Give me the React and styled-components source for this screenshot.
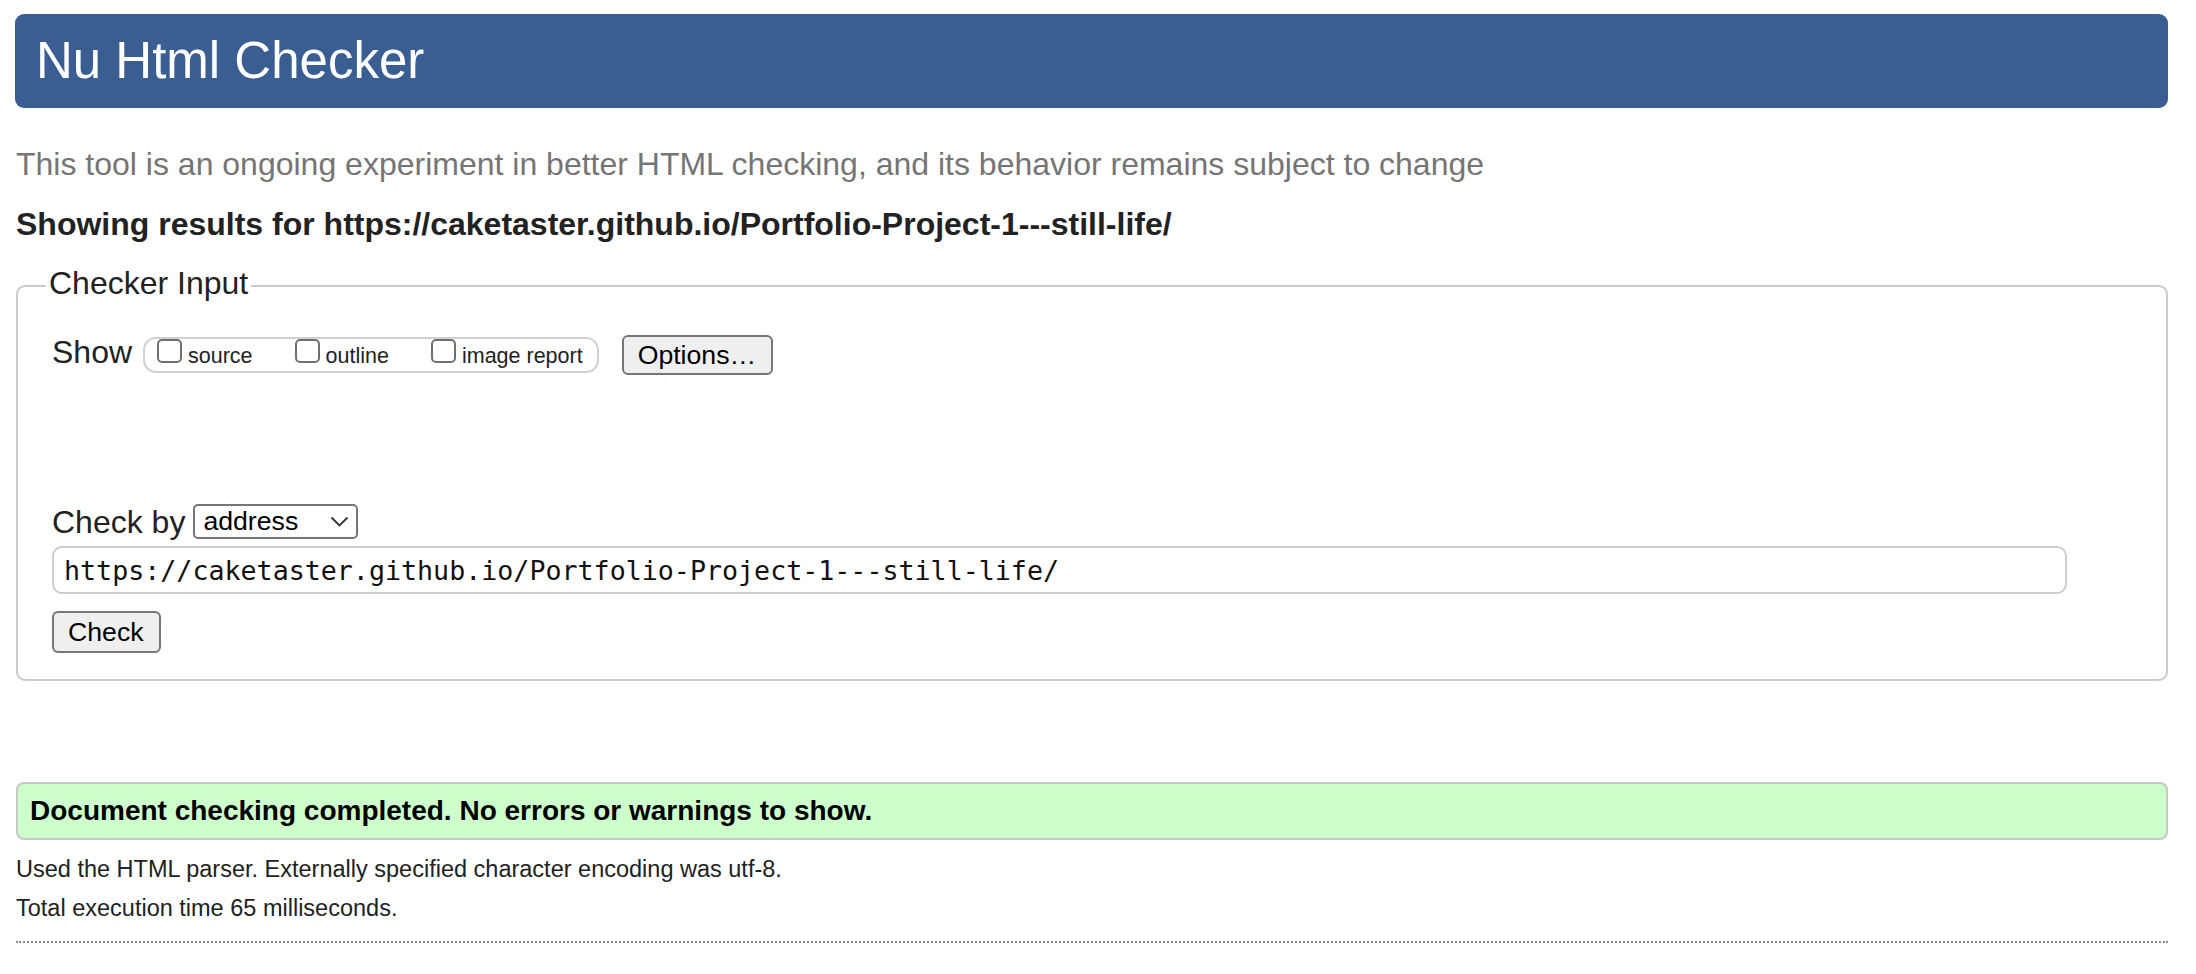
import styled, { createGlobalStyle } from "styled-components";

const GlobalStyle = createGlobalStyle`
    body {
        margin: 0;
        background: #fff;
        font-family: "Liberation Sans", Arial, sans-serif;
        color: #222;
    }
`;

const App = () => {
    return (
        <Page>
            <GlobalStyle />
            <Header>
                <Title>Nu Html Checker</Title>
            </Header>
            <Intro>This tool is an ongoing experiment in better HTML checking, and its behavior remains subject to change</Intro>
            <Showing>Showing results for https://caketaster.github.io/Portfolio-Project-1---still-life/</Showing>

            <Fieldset>
                <Legend>Checker Input</Legend>
                <ShowRow>
                    <RowLabel>Show</RowLabel>
                    <Group>
                        <CheckItem>
                            <Box type="checkbox" />
                            <span>source</span>
                        </CheckItem>
                        <CheckItem>
                            <Box type="checkbox" />
                            <span>outline</span>
                        </CheckItem>
                        <CheckItem>
                            <Box type="checkbox" />
                            <span>image report</span>
                        </CheckItem>
                    </Group>
                    <Button $ml="23px">Options…</Button>
                </ShowRow>

                <CheckByRow>
                    <RowLabel $lift="0px">Check by</RowLabel>
                    <Select>
                        <span>address</span>
                        <svg width="19" height="11" viewBox="0 0 19 11">
                            <path d="M1.5 1.5 L9.5 9.5 L17.5 1.5" fill="none" stroke="#333" strokeWidth="1.8" />
                        </svg>
                    </Select>
                </CheckByRow>
                <UrlInput defaultValue="https://caketaster.github.io/Portfolio-Project-1---still-life/" />
                <Button $mt="17px">Check</Button>
            </Fieldset>

            <Success>Document checking completed. No errors or warnings to show.</Success>
            <Note $mt="10px">Used the HTML parser. Externally specified character encoding was utf-8.</Note>
            <Note>Total execution time 65 milliseconds.</Note>
            <Rule />
        </Page>
    )
}

const Page = styled.div`
    padding: 14px 28px 0 16px;
`;

const Header = styled.header`
    height: 94px;
    margin-left: -1px;
    padding-left: 21px;
    background: #3a5e92;
    border-radius: 9px;
    display: flex;
    align-items: center;
`;

const Title = styled.h1`
    margin: 0;
    font-size: 51px;
    font-weight: 400;
    line-height: 94px;
    color: #fff;
`;

const Intro = styled.p`
    margin: 36px 0 0;
    font-size: 32px;
    line-height: 40px;
    color: #757575;
`;

const Showing = styled.h2`
    margin: 20px 0 0;
    font-size: 32px;
    line-height: 40px;
    font-weight: 700;
    color: #222;
`;

const Fieldset = styled.fieldset`
    margin: 21px 0 0;
    min-width: 0;
    padding: 29px 34px 26px;
    border: 2px solid #cbcbcb;
    border-radius: 9px;
`;

const Legend = styled.legend`
    margin-left: -6px;
    padding: 0 3px 4px;
    font-size: 32px;
    line-height: 37px;
    color: #222;
`;

const ShowRow = styled.div`
    display: flex;
    align-items: center;
    height: 40px;
`;

const RowLabel = styled.span`
    font-size: 32px;
    line-height: 36px;
    margin-right: ${(p) => (p.$lift ? "8px" : "11px")};
    padding-bottom: ${(p) => p.$lift || "6px"};
    color: #222;
`;

const Group = styled.div`
    display: flex;
    align-items: flex-start;
    height: 36px;
    box-sizing: border-box;
    padding: 0 14px 0 12px;
    border: 2px solid #d0d0d0;
    border-radius: 13px;
`;

const CheckItem = styled.label`
    display: flex;
    align-items: flex-start;
    gap: 6px;
    font-size: 21.5px;
    line-height: 24px;
    color: #222;
    & + & {
        margin-left: 42px;
    }
    span {
        padding-top: 5px;
    }
`;

const Box = styled.input`
    appearance: none;
    margin: 0;
    width: 25px;
    height: 24px;
    box-sizing: border-box;
    border: 2px solid #707070;
    border-radius: 5px;
    background: #fff;
`;

const Button = styled.button`
    display: block;
    margin: ${(p) => p.$mt || 0} 0 0 ${(p) => p.$ml || 0};
    height: ${(p) => (p.$ml ? "40px" : "42px")};
    padding: 0 15px 0 14px;
    background: #efefef;
    border: 2px solid #767676;
    border-radius: 6px;
    font-family: "Liberation Sans", Arial, sans-serif;
    font-size: 26.67px;
    color: #000;
`;

const CheckByRow = styled.div`
    display: flex;
    align-items: center;
    margin-top: 129px;
    height: 35px;
`;

const Select = styled.div`
    width: 165px;
    height: 35px;
    box-sizing: border-box;
    display: flex;
    align-items: center;
    justify-content: space-between;
    padding: 0 7px 0 8px;
    border: 2px solid #767676;
    border-radius: 5px;
    font-size: 26.67px;
    color: #000;
`;

const UrlInput = styled.input`
    display: block;
    margin-top: 7px;
    width: calc(100% - 65px);
    height: 48px;
    box-sizing: border-box;
    padding: 0 10px;
    border: 2px solid #cdcdcd;
    border-radius: 10px;
    font-family: "DejaVu Sans Mono", "Liberation Mono", monospace;
    font-size: 26.67px;
    color: #111;
    outline: none;
`;

const Success = styled.div`
    margin-top: 101px;
    height: 58px;
    box-sizing: border-box;
    padding-left: 12px;
    background: #ccffcc;
    border: 2px solid #c6c6c6;
    border-radius: 8px;
    font-size: 28px;
    font-weight: 700;
    line-height: 54px;
    color: #000;
`;

const Note = styled.p`
    margin: ${(p) => p.$mt || 0} 0 0;
    font-size: 23.5px;
    line-height: 39px;
    color: #222;
`;

const Rule = styled.hr`
    margin: 13px 0 0;
    border: none;
    border-top: 2px dotted #8a8a8a;
`;

export default App;
